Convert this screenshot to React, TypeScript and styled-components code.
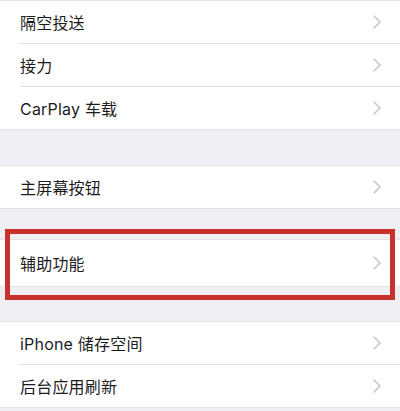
import styled, { createGlobalStyle } from "styled-components";

const GlobalStyle = createGlobalStyle`
  html, body {
    margin: 0;
    padding: 0;
    background: #efeff4;
    font-family: "Inter", "Noto Sans CJK SC", sans-serif;
  }
`;

interface RowData {
  label: string;
  highlight?: boolean;
}

const groups: { gap: number; rows: RowData[] }[] = [
  { gap: 0, rows: [{ label: "隔空投送" }, { label: "接力" }, { label: "CarPlay 车载" }] },
  { gap: 35, rows: [{ label: "主屏幕按钮" }] },
  { gap: 30, rows: [{ label: "辅助功能", highlight: true }] },
  { gap: 34, rows: [{ label: "iPhone 储存空间" }, { label: "后台应用刷新" }] },
];

const Chevron = () => (
  <svg width="8" height="14" viewBox="0 0 8 14">
    <polyline
      points="1,1 7,7 1,13"
      fill="none"
      stroke="#c7c7cc"
      strokeWidth="1.6"
      strokeLinecap="round"
      strokeLinejoin="round"
    />
  </svg>
);

const App = () => {
  return (
    <>
      <GlobalStyle />
      <Page>
        {groups.map((g, gi) => (
          <Group key={gi} $gap={g.gap}>
            {g.rows.map((r, ri) => (
              <Row key={ri} $tall={r.highlight}>
                <Label>{r.label}</Label>
                <Chevron />
                {ri < g.rows.length - 1 && <Separator />}
                {r.highlight && <Highlight />}
              </Row>
            ))}
          </Group>
        ))}
      </Page>
    </>
  );
};

const Page = styled.div`
  display: flex;
  flex-direction: column;
  width: 400px;
  height: 411px;
  overflow: hidden;
`;

const Group = styled.div<{ $gap: number }>`
  display: flex;
  flex-direction: column;
  margin-top: ${({ $gap }) => $gap}px;
  background: #ffffff;
  border-top: 1px solid #e4e4e8;
  border-bottom: 1px solid #e4e4e8;
`;

const Row = styled.div<{ $tall?: boolean }>`
  position: relative;
  display: flex;
  align-items: center;
  justify-content: space-between;
  height: ${({ $tall }) => ($tall ? 46 : 42)}px;
  padding: 0 19px 0 20px;
  & + & {
    margin-top: 1px;
  }
`;

const Label = styled.span`
  font-size: 16px;
  color: #1c1c1e;
  letter-spacing: 0.2px;
`;

const Separator = styled.div`
  position: absolute;
  left: 20px;
  right: 0;
  bottom: -1px;
  height: 1px;
  background: #e0e0e4;
`;

const Highlight = styled.div`
  position: absolute;
  left: 5px;
  right: 5px;
  top: -11px;
  bottom: -14px;
  border: 5px solid #c8312b;
  pointer-events: none;
`;

export default App;
